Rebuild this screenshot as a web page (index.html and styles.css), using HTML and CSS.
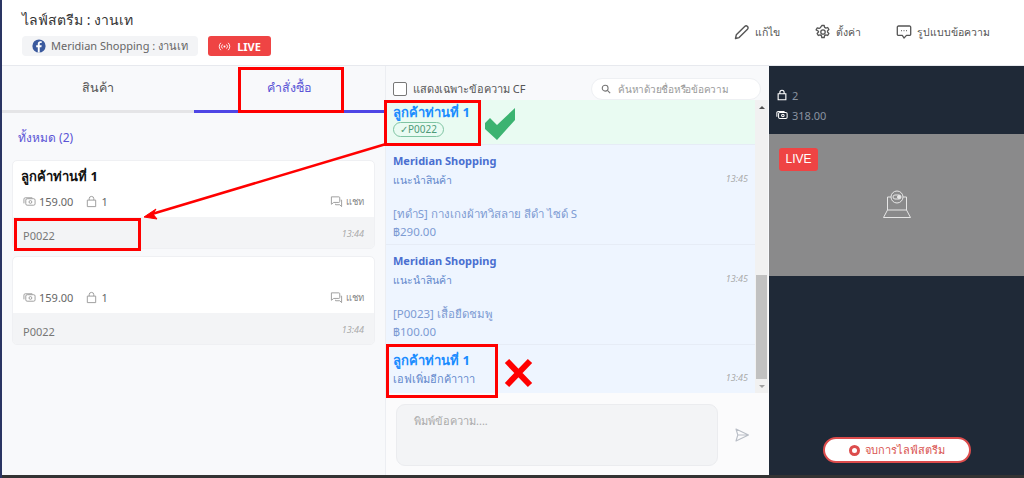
FILE: index.html
```html
<!DOCTYPE html>
<html lang="th">
<head>
    <meta charset="UTF-8">
    <meta name="viewport" content="width=device-width, initial-scale=1.0">
    <title>ไลฟ์สตรีม : งานเท</title>
    <link rel="stylesheet" href="styles.css">
</head>
<body>
    <div class="page">
        <!-- Header -->
        <header class="top-bar">
            <div class="top-left">
                <h1>ไลฟ์สตรีม : งานเท</h1>
                <div class="page-row">
                    <div class="page-chip">
                        <svg class="fb-icon" viewBox="0 0 14 14"><circle cx="7" cy="7" r="6.6" fill="#3b5a9e"/><path d="M7.7 13.5V8.2h1.7l.3-2H7.7V5c0-.6.2-1 1-1h1V2.300C9.500 2.300 9 2.200 8.400 2.200 6.900 2.200 5.800 3.100 5.800 4.800v1.400H4.200v2h1.600v5.300z" fill="#fff"/></svg>
                        <span>Meridian Shopping : งานเท</span>
                    </div>
                    <div class="live-chip">
                        <svg class="live-icon" viewBox="0 0 14 12" fill="none" stroke="#fff" stroke-width="1"><circle cx="7" cy="6" r="1.100" fill="#fff" stroke="none"/><path d="M4.800 3.800a3 3 0 0 0 0 4.400M9.200 3.800a3 3 0 0 1 0 4.400M3 2a5.500 5.500 0 0 0 0 8M11 2a5.500 5.500 0 0 1 0 8"/></svg>
                        <span>LIVE</span>
                    </div>
                </div>
            </div>
            <nav class="top-actions">
                <a class="action">
                    <svg viewBox="0 0 16 16" fill="none" stroke="#555" stroke-width="1.400"><path d="M1.500 14.500l.8-3.700 8.400-8.400a1.800 1.800 0 0 1 2.800 2.800l-8.400 8.400z" stroke-linejoin="round"/></svg>
                    แก้ไข
                </a>
                <a class="action">
                    <svg viewBox="0 0 16 16" fill="none" stroke="#555" stroke-width="1.300"><path d="M6.800 1.500h2.400l.4 1.900 1.300.7 1.800-.6 1.200 2.100-1.400 1.300v1.200l1.400 1.300-1.200 2.100-1.800-.6-1.300.7-.4 1.900H6.800l-.4-1.900-1.300-.7-1.800.6-1.200-2.100 1.400-1.300V7.200L1.100 5.900l1.200-2.100 1.800.6 1.300-.7z" stroke-linejoin="round"/><circle cx="8" cy="8" r="2.200"/></svg>
                    ตั้งค่า
                </a>
                <a class="action">
                    <svg viewBox="0 0 16 16" fill="none" stroke="#555" stroke-width="1.300"><path d="M2.500 2h11a1.200 1.200 0 0 1 1.200 1.200v7a1.200 1.200 0 0 1-1.200 1.200h-3L8 14l-1.700-2.600H2.500a1.200 1.200 0 0 1-1.200-1.200v-7A1.200 1.200 0 0 1 2.500 2z" stroke-linejoin="round"/><path d="M5 6.700h.8M7.600 6.700h.8M10.200 6.700h.8"/></svg>
                    รูปแบบข้อความ
                </a>
            </nav>
        </header>

        <main class="columns">
            <!-- Orders column -->
            <section class="orders">
                <div class="tabs">
                    <div class="tab">สินค้า</div>
                    <div class="tab tab-active">คำสั่งซื้อ</div>
                </div>
                <div class="orders-body">
                    <p class="total">ทั้งหมด (2)</p>

                    <div class="card">
                        <div class="card-name">ลูกค้าท่านที่ 1</div>
                        <div class="card-stats">
                            <svg class="mini" viewBox="0 0 14 14" fill="none" stroke="#999"><rect x="3" y="4" width="10" height="7" rx="1.500"/><path d="M1 9V4.500A1.500 1.500 0 0 1 2.500 3H10"/><circle cx="8" cy="7.500" r="1.500"/></svg>
                            <span>159.00</span>
                            <svg class="mini bag" viewBox="0 0 14 14" fill="none" stroke="#999"><path d="M2.500 5.500h9v7h-9zM4.500 5.500V4a2.500 2.500 0 0 1 5 0v1.500"/></svg>
                            <span>1</span>
                            <span class="chat">
                                <svg class="mini" viewBox="0 0 14 14" fill="none" stroke="#999"><path d="M1.500 2h8a1 1 0 0 1 1 1v4a1 1 0 0 1-1 1H4L1.500 10z" stroke-linejoin="round"/><path d="M11.500 5.500h1v7l-2-2H6V9.500"/></svg>
                                แชท
                            </span>
                        </div>
                        <div class="card-foot"><span>P0022</span><em>13:44</em></div>
                    </div>

                    <div class="card">
                        <div class="card-name">&nbsp;</div>
                        <div class="card-stats">
                            <svg class="mini" viewBox="0 0 14 14" fill="none" stroke="#999"><rect x="3" y="4" width="10" height="7" rx="1.500"/><path d="M1 9V4.500A1.500 1.500 0 0 1 2.500 3H10"/><circle cx="8" cy="7.500" r="1.500"/></svg>
                            <span>159.00</span>
                            <svg class="mini bag" viewBox="0 0 14 14" fill="none" stroke="#999"><path d="M2.500 5.500h9v7h-9zM4.500 5.500V4a2.500 2.500 0 0 1 5 0v1.500"/></svg>
                            <span>1</span>
                            <span class="chat">
                                <svg class="mini" viewBox="0 0 14 14" fill="none" stroke="#999"><path d="M1.500 2h8a1 1 0 0 1 1 1v4a1 1 0 0 1-1 1H4L1.500 10z" stroke-linejoin="round"/><path d="M11.500 5.500h1v7l-2-2H6V9.500"/></svg>
                                แชท
                            </span>
                        </div>
                        <div class="card-foot"><span>P0022</span><em>13:44</em></div>
                    </div>
                </div>
            </section>

            <!-- Chat column -->
            <section class="chat-col">
                <div class="chat-tools">
                    <label class="cf-check"><span class="box"></span>แสดงเฉพาะข้อความ CF</label>
                    <div class="search">
                        <svg viewBox="0 0 12 12" fill="none" stroke="#777" stroke-width="1.300"><circle cx="5" cy="5" r="3.500"/><path d="M7.700 7.700L11 11"/></svg>
                        <span>ค้นหาด้วยชื่อหรือข้อความ</span>
                    </div>
                </div>
                <div class="msg-wrap">
                    <div class="msg-list">
                        <div class="msg msg-green">
                            <div class="msg-name">ลูกค้าท่านที่ 1</div>
                            <span class="cf-tag">✓P0022</span>
                        </div>
                        <div class="msg msg-shop">
                            <div class="shop-name">Meridian Shopping</div>
                            <div class="line-time"><span>แนะนำสินค้า</span><em>13:45</em></div>
                            <div class="product">[ทดำS] กางเกงผ้าทวิสลาย สีดำ ไซด์ S<br>฿290.00</div>
                        </div>
                        <div class="msg msg-shop">
                            <div class="shop-name">Meridian Shopping</div>
                            <div class="line-time"><span>แนะนำสินค้า</span><em>13:45</em></div>
                            <div class="product">[P0023] เสื้อยืดชมพู<br>฿100.00</div>
                        </div>
                        <div class="msg msg-last">
                            <div class="msg-name">ลูกค้าท่านที่ 1</div>
                            <div class="line-time"><span>เอฟเพิ่มอีกค้าาาา</span><em>13:45</em></div>
                        </div>
                    </div>
                    <div class="scrollbar">
                        <i class="arrow-up"></i>
                        <div class="track"><div class="thumb"></div></div>
                        <i class="arrow-down"></i>
                    </div>
                </div>
                <div class="composer">
                    <div class="textarea">พิมพ์ข้อความ....</div>
                    <svg class="send" viewBox="0 0 16 16" fill="none" stroke="#b9bec6" stroke-width="1.100"><path d="M2 2l12.500 6L2 14l1.800-6zM3.800 8h10.700" stroke-linejoin="round"/></svg>
                </div>
            </section>

            <!-- Video column -->
            <aside class="video-col">
                <div class="video-stats">
                    <div class="v-row">
                        <svg viewBox="0 0 14 14" fill="none" stroke="#fff" stroke-width="1.300"><path d="M2.500 5.500h9v7h-9zM4.500 5.500V4a2.500 2.500 0 0 1 5 0v1.500"/></svg>
                        <span>2</span>
                    </div>
                    <div class="v-row">
                        <svg viewBox="0 0 14 14" fill="none" stroke="#fff" stroke-width="1.200"><rect x="3" y="4" width="10" height="7" rx="1.500"/><path d="M1 9V4.500A1.500 1.500 0 0 1 2.500 3H10"/><circle cx="8" cy="7.500" r="1.500"/></svg>
                        <span>318.00</span>
                    </div>
                </div>
                <div class="video">
                    <span class="video-live">LIVE</span>
                    <svg class="cam" viewBox="0 0 30 30" fill="none" stroke="#e6e6e6" stroke-width="1"><path d="M9 7H5.500v13h19V7H21"/><circle cx="15" cy="7" r="6"/><rect x="11" y="5" width="8" height="4" rx="2"/><circle cx="17" cy="7" r="1.500" fill="#e6e6e6"/><path d="M5.500 20L1.500 27.500h27L24.500 20"/></svg>
                </div>
                <div class="video-foot">
                    <button class="end-btn"><i class="rec"></i>จบการไลฟ์สตรีม</button>
                </div>
            </aside>
        </main>
        <div class="bottom-line"></div>
    </div>

    <!-- Red marks drawn on top of the screenshot -->
    <div class="mark mark-tab"></div>
    <div class="mark mark-name"></div>
    <div class="mark mark-code"></div>
    <div class="mark mark-last"></div>
    <svg class="overlay" viewBox="0 0 1024 478">
        <path d="M386 144L152 214" stroke="#f00" stroke-width="2.500" fill="none"/>
        <path d="M144 217l12-8-3 5 4 5z" fill="#f00" stroke="#f00"/>
        <path d="M485 123l5-5 7 7 18-17v12l-18 20-12-11z" fill="#3cb371"/>
        <path d="M507 361L530 385M530 361L507 385" stroke="#f00" stroke-width="6" fill="none"/>
    </svg>
</body>
</html>
```

FILE: styles.css
```css
html, body {
    height: 100%;
    margin: 0;
    padding: 0;
    overflow: hidden;
}

body {
    font-family: "Noto Sans", "Open Sans", sans-serif;
    color: #555;
    font-size: 12px;
    background-color: #fff;
}

.page {
    display: flex;
    flex-direction: column;
    height: 478px;
    border-left: 2px solid #2a3563;
    box-sizing: border-box;
}

/* Header */
.top-bar {
    display: flex;
    justify-content: space-between;
    height: 66px;
    box-sizing: border-box;
    padding: 10px 34px 0 20px;
    background-color: #fff;
    border-bottom: 1px solid #e7e9ee;
}

h1 {
    margin: 0;
    font-size: 14px;
    line-height: 20px;
    font-weight: 400;
    color: #333;
}

.page-row {
    display: flex;
    align-items: center;
    gap: 10px;
    margin-top: 6px;
}

.page-chip {
    display: flex;
    align-items: center;
    gap: 5px;
    width: 176px;
    height: 20px;
    box-sizing: border-box;
    padding-left: 10px;
    background-color: #f3f4f6;
    border-radius: 4px;
    font-size: 11px;
    color: #666;
}

.fb-icon {
    width: 14px;
    height: 14px;
}

.live-chip {
    display: flex;
    align-items: center;
    justify-content: center;
    gap: 6px;
    width: 63px;
    height: 20px;
    background-color: #ef4444;
    border-radius: 3px;
    color: #fff;
    font-size: 11px;
    font-weight: 700;
}

.live-icon {
    width: 13px;
    height: 11px;
}

.top-actions {
    display: flex;
    align-items: center;
    gap: 35px;
    height: 44px;
}

.action {
    display: flex;
    align-items: center;
    gap: 5px;
    font-size: 10.5px;
    color: #555;
}

.action svg {
    width: 16px;
    height: 16px;
}

/* Columns */
.columns {
    flex: 1;
    display: flex;
    min-height: 0;
}

.orders {
    width: 383px;
    background-color: #f8f9fb;
}

.tabs {
    display: flex;
    height: 47px;
}

.tab {
    flex: 1;
    display: flex;
    align-items: center;
    justify-content: center;
    box-sizing: border-box;
    padding-bottom: 1px;
    font-size: 12.5px;
    color: #555;
    border-bottom: 3px solid #e5e5e7;
}

.tab-active {
    color: #5b55d6;
    border-bottom-color: #4f46e5;
}

.orders-body {
    padding: 0 10px;
}

.total {
    margin: 0;
    padding: 16px 0 13px 6px;
    font-size: 12px;
    line-height: 18px;
    color: #5b55d6;
}

.card {
    margin-bottom: 7px;
    height: 89px;
    display: flex;
    flex-direction: column;
    background-color: #fff;
    border: 1px solid #eff0f3;
    border-radius: 5px;
    box-sizing: border-box;
    overflow: hidden;
}

.card-name {
    padding: 6px 0 0 8px;
    height: 26px;
    box-sizing: border-box;
    line-height: 18px;
    font-size: 13px;
    font-weight: 700;
    color: #111;
}

.card-stats {
    flex: 1;
    display: flex;
    align-items: center;
    padding: 0 10px 2px;
    color: #666;
    font-size: 11px;
}

.mini {
    width: 13px;
    height: 13px;
    margin-right: 3px;
}

.mini.bag {
    margin-left: 12px;
}

.chat {
    margin-left: auto;
    display: flex;
    align-items: center;
    font-size: 9.5px;
    color: #888;
}

.card-foot {
    display: flex;
    justify-content: space-between;
    align-items: center;
    height: 31px;
    padding: 6px 10px 0;
    box-sizing: border-box;
    background-color: #f3f4f6;
    font-size: 11px;
    color: #777;
}

.card-foot em {
    font-size: 9px;
    color: #aaa;
    margin-top: -5px;
}

.line-time em {
    font-size: 9px;
    color: #aaa;
}

/* Chat */
.chat-col {
    width: 384px;
    display: flex;
    flex-direction: column;
    background-color: #f8f9fb;
    border-left: 1px solid #eceef2;
    box-sizing: border-box;
}

.chat-tools {
    display: flex;
    align-items: center;
    justify-content: space-between;
    height: 34px;
    padding: 12px 8px 0 7px;
    box-sizing: border-box;
}

.cf-check {
    display: flex;
    align-items: center;
    gap: 6px;
    font-size: 11px;
    color: #555;
}

.box {
    width: 12px;
    height: 12px;
    border: 1px solid #777;
    border-radius: 2px;
    background-color: #fff;
}

.search {
    display: flex;
    align-items: center;
    gap: 7px;
    width: 170px;
    height: 22px;
    box-sizing: border-box;
    padding-left: 9px;
    background-color: #fff;
    border: 1px solid #eef0f3;
    border-radius: 11px;
    font-size: 10px;
    letter-spacing: -0.25px;
    color: #999;
}

.search svg {
    width: 10px;
    height: 10px;
}

.msg-wrap {
    flex: 1;
    display: flex;
    min-height: 0;
}

.msg-list {
    width: 369px;
    background-color: #eef5ff;
}

.msg {
    padding-left: 7px;
    padding-right: 7px;
    box-sizing: border-box;
    border-bottom: 1px solid #e6ecf6;
    color: #6288cc;
    font-size: 11px;
}

.msg-green {
    height: 45px;
    padding-top: 4px;
    background-color: #e9fbf2;
}

.msg-name {
    font-size: 13px;
    line-height: 17px;
    font-weight: 700;
    color: #1a8cff;
}

.cf-tag {
    display: inline-block;
    margin-top: 1px;
    padding: 0 6px;
    line-height: 13px;
    border: 1px solid #7fc4a3;
    border-radius: 8px;
    font-size: 10px;
    color: #4e9a78;
}

.msg-shop {
    height: 100px;
    padding-top: 8px;
}

.shop-name {
    font-size: 11px;
    line-height: 16px;
    font-weight: 700;
    color: #4a6fd0;
}

.line-time {
    display: flex;
    justify-content: space-between;
    align-items: center;
    margin-top: 1px;
    line-height: 20px;
    font-size: 10.5px;
}

.line-time em {
    margin-top: -2px;
}

.product {
    margin-top: 15px;
    line-height: 17.5px;
    font-size: 11.5px;
    color: #7d9bd3;
}

.msg-last {
    height: 49px;
    padding-top: 7px;
}

.msg-last .line-time {
    margin-top: 0;
    font-size: 11px;
}

.scrollbar {
    width: 13px;
    display: flex;
    flex-direction: column;
    background-color: #f1f1f1;
}

.track {
    flex: 1;
    padding-top: 160px;
}

.thumb {
    height: 104px;
    margin: 0 1px;
    background-color: #c1c1c1;
}

.arrow-up, .arrow-down {
    display: block;
    height: 16px;
    box-sizing: border-box;
    position: relative;
}

.arrow-up::before, .arrow-down::before {
    content: "";
    position: absolute;
    left: 4px;
    border-left: 3px solid transparent;
    border-right: 3px solid transparent;
}

.arrow-up::before {
    top: 6px;
    border-bottom: 3px solid #505050;
}

.arrow-down::before {
    top: 6px;
    border-top: 3px solid #a0a0a0;
}

.composer {
    display: flex;
    align-items: flex-start;
    height: 82px;
    padding: 11px 19px 0 10px;
    gap: 16px;
    box-sizing: border-box;
    background-color: #fbfbfc;
}

.textarea {
    width: 322px;
    height: 62px;
    box-sizing: border-box;
    padding: 7px 17px;
    background-color: #f3f4f6;
    border: 1px solid #ebecef;
    border-radius: 9px;
    font-size: 11px;
    color: #aaa;
}

.send {
    width: 16px;
    height: 16px;
    margin-top: 23px;
}

/* Video */
.video-col {
    flex: 1;
    display: flex;
    flex-direction: column;
    background-color: #1f2937;
}

.video-stats {
    height: 68px;
    box-sizing: border-box;
    padding: 19px 0 0 7px;
}

.v-row {
    display: flex;
    align-items: center;
    gap: 4px;
    height: 20px;
    font-size: 11px;
    color: #8a93a0;
}

.v-row svg {
    width: 12px;
    height: 12px;
}

.video {
    position: relative;
    height: 142px;
    display: flex;
    align-items: center;
    justify-content: center;
    background-color: #8a8a8b;
}

.video-live {
    position: absolute;
    left: 10px;
    top: 14px;
    width: 39px;
    line-height: 23px;
    text-align: center;
    background-color: #ef4444;
    border-radius: 3px;
    font-family: "Liberation Sans", sans-serif;
    font-size: 12px;
    color: #fff;
}

.cam {
    width: 30px;
    height: 30px;
}

.video-foot {
    flex: 1;
    display: flex;
    justify-content: center;
    padding-top: 161px;
    padding-left: 1px;
    box-sizing: border-box;
}

.end-btn {
    display: flex;
    align-items: center;
    justify-content: center;
    gap: 5px;
    width: 148px;
    height: 26px;
    background-color: #fff;
    border: 2px solid #dc4c4c;
    border-radius: 13px;
    font-family: inherit;
    font-size: 11px;
    color: #d9534f;
}

.rec {
    width: 5px;
    height: 5px;
    border: 3px solid #dc4c4c;
    border-radius: 50%;
    background-color: #fff;
}

.bottom-line {
    height: 3px;
    background-color: #333;
}

/* Annotations */
.mark {
    position: absolute;
    border: 3px solid #f00;
    box-sizing: border-box;
}

.mark-tab {
    left: 238px;
    top: 67px;
    width: 106px;
    height: 46px;
}

.mark-name {
    left: 384px;
    top: 100px;
    width: 97px;
    height: 46px;
}

.mark-code {
    left: 14px;
    top: 218px;
    width: 127px;
    height: 33px;
}

.mark-last {
    left: 386px;
    top: 344px;
    width: 112px;
    height: 54px;
}

.overlay {
    position: absolute;
    left: 0;
    top: 0;
    width: 1024px;
    height: 478px;
    pointer-events: none;
}
```
